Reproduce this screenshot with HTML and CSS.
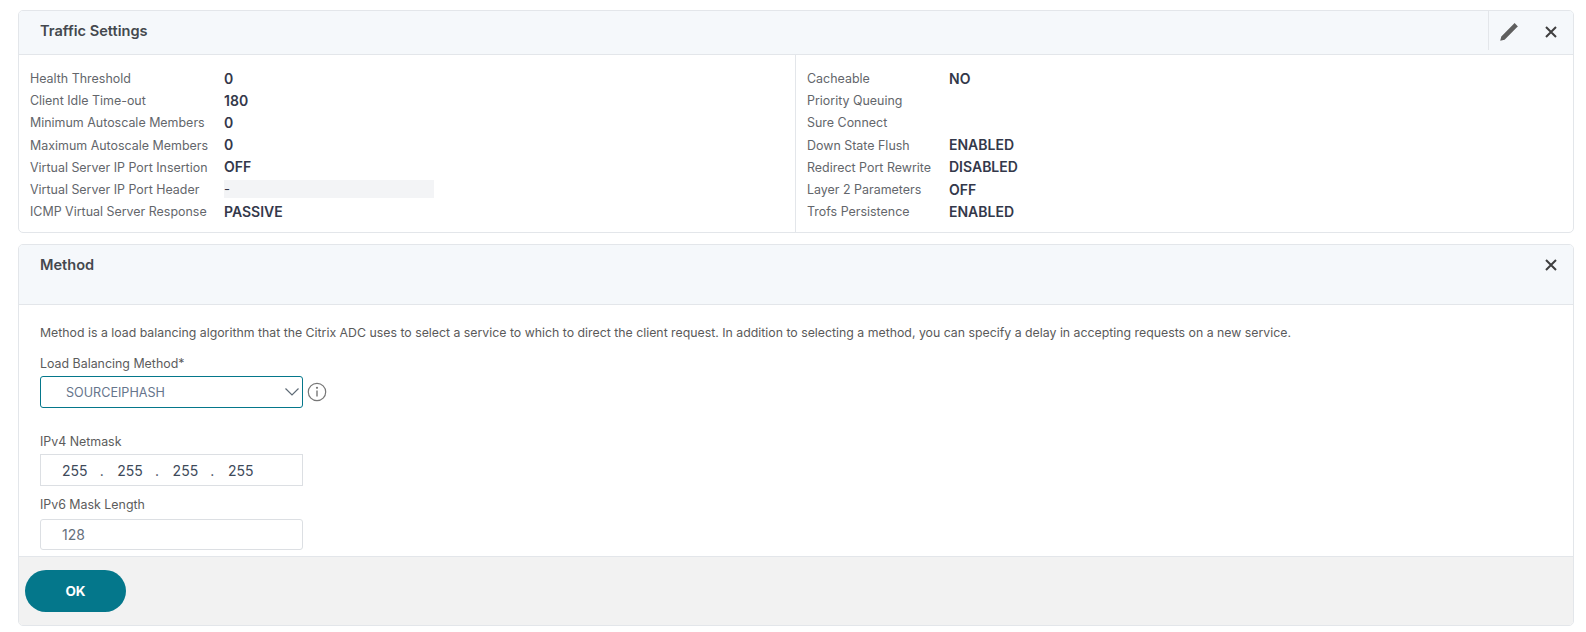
FILE: index.html
```html
<!DOCTYPE html>
<html lang="en">
<head>
<meta charset="utf-8">
<title>Traffic Settings</title>
<link rel="stylesheet" href="styles.css">
</head>
<body>
<section class="card card-traffic">
  <header class="card-head head-traffic">
    <h2 class="card-title">Traffic Settings</h2>
    <div class="actions">
      <button class="icon-btn btn-edit" aria-label="Edit">
        <svg width="20" height="20" viewBox="0 0 20 20"><path class="glyph" d="M1.2 18.8l1.1-4.4L14.4 2.3l1.2-1.2 3.3 3.3-1.2 1.2L5.6 17.7z"/></svg>
      </button>
      <button class="icon-btn btn-close" aria-label="Close">
        <svg width="12" height="12" viewBox="0 0 12 12"><path class="cross" d="M1 1l10 10M11 1L1 11"/></svg>
      </button>
    </div>
  </header>
  <div class="detail">
    <dl class="kv kv-left">
      <dt>Health Threshold</dt><dd>0</dd>
      <dt>Client Idle Time-out</dt><dd>180</dd>
      <dt>Minimum Autoscale Members</dt><dd>0</dd>
      <dt>Maximum Autoscale Members</dt><dd>0</dd>
      <dt>Virtual Server IP Port Insertion</dt><dd>OFF</dd>
      <dt>Virtual Server IP Port Header</dt><dd class="shaded">-</dd>
      <dt>ICMP Virtual Server Response</dt><dd>PASSIVE</dd>
    </dl>
    <dl class="kv kv-right">
      <dt>Cacheable</dt><dd>NO</dd>
      <dt>Priority Queuing</dt><dd></dd>
      <dt>Sure Connect</dt><dd></dd>
      <dt>Down State Flush</dt><dd>ENABLED</dd>
      <dt>Redirect Port Rewrite</dt><dd>DISABLED</dd>
      <dt>Layer 2 Parameters</dt><dd>OFF</dd>
      <dt>Trofs Persistence</dt><dd>ENABLED</dd>
    </dl>
  </div>
</section>
<section class="card card-method">
  <header class="card-head head-method">
    <h2 class="card-title">Method</h2>
    <div class="actions">
      <button class="icon-btn btn-close" aria-label="Close">
        <svg width="12" height="12" viewBox="0 0 12 12"><path class="cross" d="M1 1l10 10M11 1L1 11"/></svg>
      </button>
    </div>
  </header>
  <div class="form">
    <p class="intro">Method is a load balancing algorithm that the Citrix ADC uses to select a service to which to direct the client request. In addition to selecting a method, you can specify a delay in accepting requests on a new service.</p>
    <div class="field field-lb">
      <label class="field-label">Load Balancing Method*</label>
      <div class="select-row">
        <div class="select">
          <span>SOURCEIPHASH</span>
          <svg width="16" height="10" viewBox="0 0 16 10"><path class="chev" d="M1.5 1.5L8 8l6.5-6.5"/></svg>
        </div>
        <svg class="info" width="20" height="20" viewBox="0 0 20 20"><circle class="info-ring" cx="10" cy="10" r="8.7"/><path class="info-bar" d="M10 8.6v6"/><circle class="info-dot" cx="10" cy="5.8" r="1.1"/></svg>
      </div>
    </div>
    <div class="field field-v4">
      <label class="field-label">IPv4 Netmask</label>
      <div class="input ip">
        <span class="oct">255</span><span class="dot">.</span><span class="oct">255</span><span class="dot">.</span><span class="oct">255</span><span class="dot">.</span><span class="oct">255</span>
      </div>
    </div>
    <div class="field field-v6">
      <label class="field-label">IPv6 Mask Length</label>
      <div class="input mask">128</div>
    </div>
  </div>
  <footer class="foot"><button class="ok">OK</button></footer>
</section>
</body>
</html>
```
FILE: styles.css
```css
* { box-sizing: border-box; }
html, body { margin: 0; height: 632px; overflow: hidden; }
body {
  background: #fff;
  padding: 10px 12px 0 18px;
  font-family: "Inter", "Liberation Sans", sans-serif;
  font-size: 12px;
  color: #5c5c5c;
}
.card {
  border: 1px solid #e3e6ea;
  border-radius: 5px;
  background: #fff;
  overflow: hidden;
}
.card-traffic { height: 223px; }
.card-method { height: 382px; margin-top: 11px; }
.card-head {
  display: flex;
  justify-content: space-between;
  background: #f5f8fb;
  border-bottom: 1px solid #e3e6ea;
  padding-left: 21px;
}
.head-traffic { height: 44px; }
.head-method { height: 60px; }
.card-title {
  margin: 11px 0 0;
  font-size: 14.6px;
  line-height: 18px;
  font-weight: 600;
  color: #44484e;
}
.actions { display: flex; align-items: flex-start; height: 39px; }
.head-method .actions { height: 37px; }
.icon-btn {
  display: flex;
  align-items: center;
  justify-content: center;
  border: 0;
  padding: 3px 0 0;
  background: none;
  height: 100%;
}
.btn-close { width: 45px; }
.btn-edit { width: 40px; border-left: 1px solid #e3e6ea; }
.glyph { fill: #5f5f5f; }
.cross { stroke: #3f3f3f; stroke-width: 2; fill: none; }
.detail { display: grid; grid-template-columns: 777px 1fr; height: 177px; }
.kv {
  margin: 0;
  padding-top: 12px;
  display: grid;
  grid-auto-rows: 22.2px;
  align-items: center;
}
.kv dt { font-size: 12.45px; padding-top: 1px; color: #63666b; white-space: nowrap; }
.kv dd { margin: 0; font-size: 14px; font-weight: 600; color: #33384a; }
.kv-left { grid-template-columns: 194px 210px; padding-left: 11px; border-right: 1px solid #e3e6ea; }
.kv-right { grid-template-columns: 142px 1fr; padding-left: 11px; }
.kv .shaded { background: #f3f4f6; height: 18px; line-height: 18px; font-weight: 400; font-size: 13px; }
.form { height: 251px; padding: 19px 21px 0; }
.intro { margin: 0; font-size: 12.32px; line-height: 18px; color: #5a5a5a; white-space: nowrap; }
.field-label { display: block; font-size: 12.4px; line-height: 16px; color: #5c5c5c; }
.field-lb { margin-top: 14px; }
.field-v4 { margin-top: 26px; }
.field-v6 { margin-top: 11px; }
.select-row { display: flex; align-items: center; margin-top: 4px; gap: 4px; }
.select {
  width: 263px;
  height: 32px;
  border: 1px solid #04778b;
  border-radius: 3px;
  padding: 0 2px 0 25px;
  display: flex;
  align-items: center;
  justify-content: space-between;
  font-size: 12.6px;
  color: #66758c;
}
.chev { fill: none; stroke: #5f6b76; stroke-width: 1.2; }
.info-ring { fill: none; stroke: #777; stroke-width: 1.2; }
.info-bar { stroke: #777; stroke-width: 1.4; }
.info-dot { fill: #777; }
.input {
  width: 263px;
  border: 1px solid #dcdfe3;
  display: flex;
  align-items: center;
  font-size: 14px;
}
.ip { height: 32px; margin-top: 4px; padding-left: 21px; color: #3e4a5a; }
.oct { width: 24px; }
.dot { width: 31.3px; text-align: center; }
.mask { height: 31px; margin-top: 6px; padding-left: 21px; border-radius: 3px; color: #66707c; }
.foot {
  background: #f2f2f2;
  height: 69px;
  border-top: 1px solid #e3e6ea;
  padding: 13px 0 0 6px;
}
.ok {
  width: 101px;
  height: 42px;
  border: 0;
  border-radius: 21px;
  background: #04778b;
  color: #fff;
  font-family: inherit;
  font-size: 13.5px;
  font-weight: 700;
}
```
